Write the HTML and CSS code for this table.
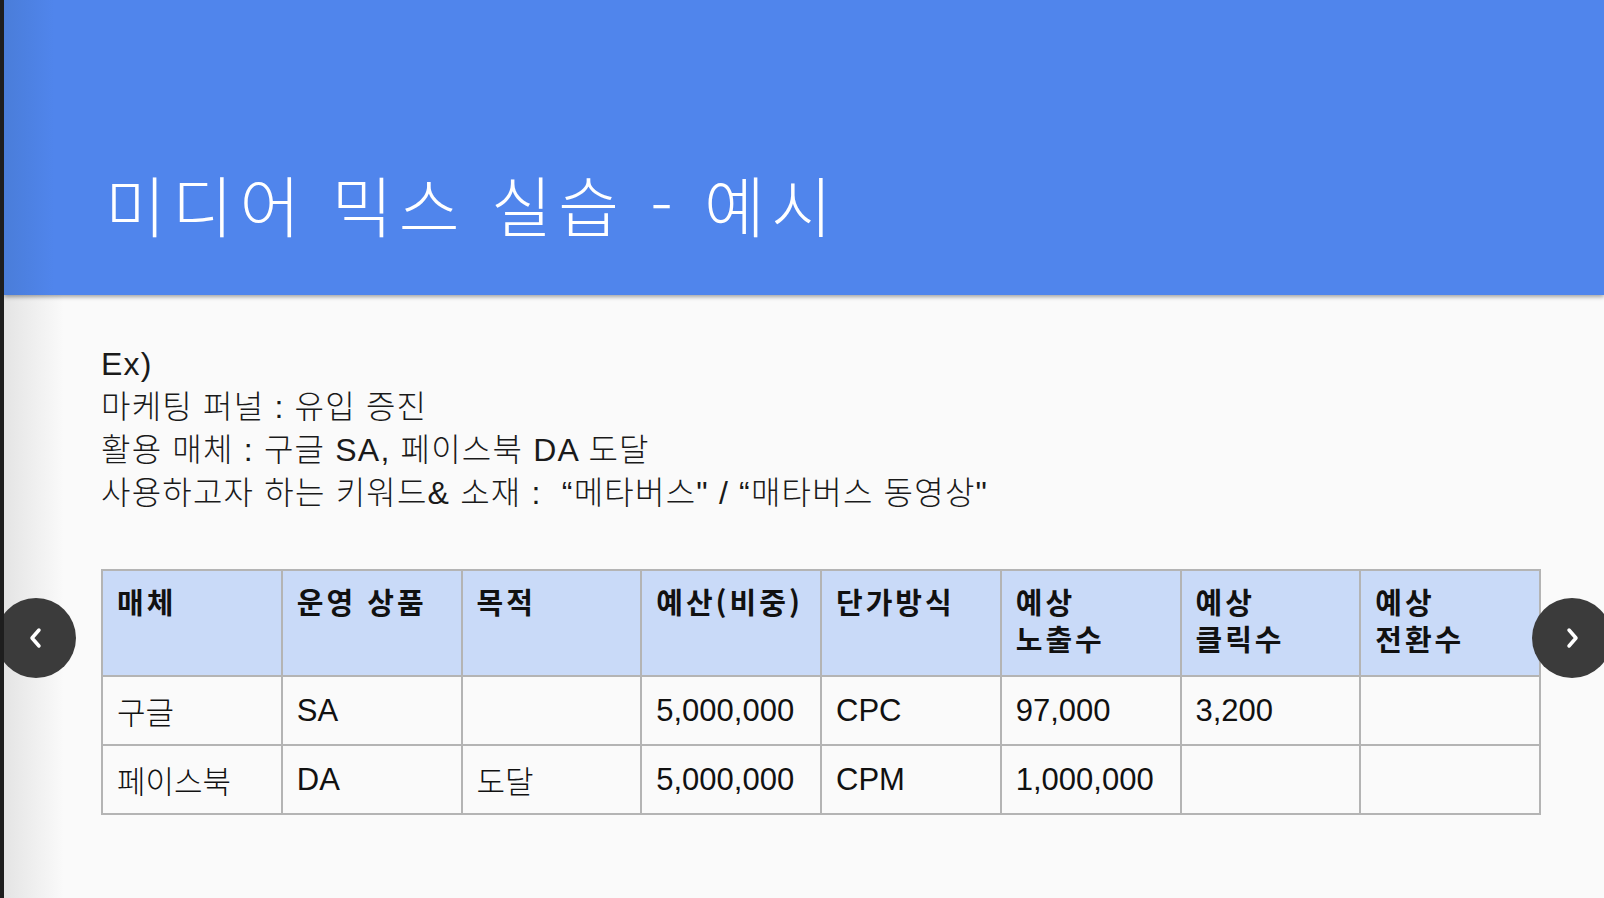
FILE: index.html
```html
<!DOCTYPE html>
<html lang="ko">
  <head>
    <meta charset="UTF-8" />
    <meta name="viewport" content="width=device-width, initial-scale=1.0" />
    <title>미디어 믹스 실습 - 예시</title>
    <link rel="stylesheet" href="styles.css">
  </head>
  <body>
    <div class="slide">
      <div class="slide-header">
        <h1>미디어 믹스 실습 - 예시</h1>
      </div>

      <div class="slide-body">
        <div class="intro">
          <p>Ex)</p>
          <p>마케팅 퍼널 : 유입 증진</p>
          <p>활용 매체 : 구글 SA, 페이스북 DA 도달</p>
          <p>사용하고자 하는 키워드&amp; 소재 :&nbsp; “메타버스" / “매타버스 동영상"</p>
        </div>

        <table class="mix-table">
          <thead>
            <tr>
              <th>매체</th>
              <th>운영 상품</th>
              <th>목적</th>
              <th>예산(비중)</th>
              <th>단가방식</th>
              <th>예상<br />노출수</th>
              <th>예상<br />클릭수</th>
              <th>예상<br />전환수</th>
            </tr>
          </thead>
          <tbody>
            <tr>
              <td>구글</td>
              <td>SA</td>
              <td></td>
              <td>5,000,000</td>
              <td>CPC</td>
              <td>97,000</td>
              <td>3,200</td>
              <td></td>
            </tr>
            <tr>
              <td>페이스북</td>
              <td>DA</td>
              <td>도달</td>
              <td>5,000,000</td>
              <td>CPM</td>
              <td>1,000,000</td>
              <td></td>
              <td></td>
            </tr>
          </tbody>
        </table>
      </div>

      <button class="nav-btn prev" type="button" aria-label="이전">
        <svg width="18" height="26" viewBox="0 0 18 26">
          <path d="M12 5 L5 13 L12 21" fill="none" stroke="#fff" stroke-width="3.5" stroke-linecap="round" stroke-linejoin="round" />
        </svg>
      </button>
      <button class="nav-btn next" type="button" aria-label="다음">
        <svg width="18" height="26" viewBox="0 0 18 26">
          <path d="M6 5 L13 13 L6 21" fill="none" stroke="#fff" stroke-width="3.5" stroke-linecap="round" stroke-linejoin="round" />
        </svg>
      </button>
    </div>
  </body>
</html>
```

FILE: styles.css
```css
body {
  margin: 0;
  background-color: #1e1e1e;
  font-family: "Liberation Sans", "Noto Sans CJK KR", sans-serif;
}

.slide {
  position: relative;
  margin-left: 4px;
  height: 898px;
  overflow: hidden;
  background-color: #fafafa;
}

.slide-header {
  position: relative;
  z-index: 1;
  height: 295px;
  box-sizing: border-box;
  padding: 163px 0 0 101px;
  background: linear-gradient(to right, #4a7dd9, #5085ec 50px);
  box-shadow: 0 2px 4px rgba(0, 0, 0, 0.35);
}

.slide-header h1 {
  margin: 0;
  color: #fff;
  font-family: "Noto Sans CJK KR", sans-serif;
  font-weight: 200;
  font-size: 66px;
  line-height: 80px;
  letter-spacing: 6.5px;
}

.slide-body {
  height: 603px;
  box-sizing: border-box;
  padding: 48px 0 0 97px;
  background: linear-gradient(to right, #e4e4e4, #fafafa 60px);
}

.intro p {
  margin: 0;
  font-size: 32px;
  font-weight: 300;
  line-height: 43px;
  letter-spacing: 1.2px;
  color: #1a1a1a;
}

.mix-table {
  margin-top: 54px;
  width: 1440px;
  table-layout: fixed;
  border-collapse: collapse;
  font-size: 31px;
  font-weight: 300;
  color: #111;
}

.mix-table th,
.mix-table td {
  border: 2px solid #b4b4b4;
  padding: 0 14px;
  text-align: left;
}

.mix-table th {
  height: 106px;
  box-sizing: border-box;
  padding-top: 12px;
  vertical-align: top;
  background-color: #c9daf8;
  font-family: "Noto Sans CJK KR", sans-serif;
  font-weight: 700;
  font-size: 29px;
  line-height: 37px;
  letter-spacing: 3px;
}

.mix-table td {
  height: 69px;
  box-sizing: border-box;
  vertical-align: middle;
}

.nav-btn {
  position: absolute;
  top: 598px;
  width: 80px;
  height: 80px;
  border: none;
  border-radius: 50%;
  background-color: #3b3b3b;
  display: flex;
  align-items: center;
  justify-content: center;
  padding: 0;
  cursor: pointer;
  z-index: 2;
}

.nav-btn.prev {
  left: -8px;
}

.nav-btn.next {
  left: 1528px;
}
```
